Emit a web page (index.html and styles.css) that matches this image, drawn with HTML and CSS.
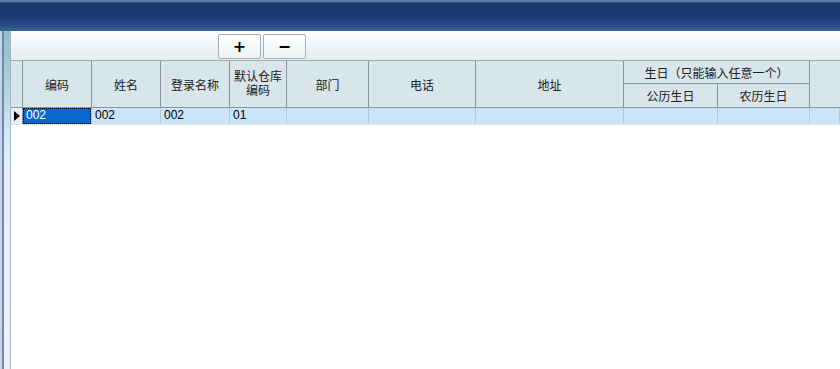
FILE: index.html
```html
<!DOCTYPE html>
<html lang="zh">
<head>
<meta charset="utf-8">
<title>用户</title>
<link rel="stylesheet" href="styles.css">
</head>
<body>
<div class="titlebar"></div>
<div class="body">
  <div class="side"><div class="side-fill"></div></div>
  <div class="panel">
    <div class="toolbar">
      <button class="btn">+</button>
      <button class="btn">−</button>
    </div>
    <div class="grid">
      <div class="hcell rowhead span2"></div>
      <div class="hcell span2">编码</div>
      <div class="hcell span2">姓名</div>
      <div class="hcell span2">登录名称</div>
      <div class="hcell span2 two"><span class="ln">默认仓库</span><span class="ln">编码</span></div>
      <div class="hcell span2">部门</div>
      <div class="hcell span2">电话</div>
      <div class="hcell span2">地址</div>
      <div class="hcell group">生日（只能输入任意一个）</div>
      <div class="hcell span2 last"></div>
      <div class="hcell sub">公历生日</div>
      <div class="hcell sub">农历生日</div>

      <div class="dcell rowhead"><span class="tri"></span></div>
      <div class="dcell sel"><span class="focus">002</span></div>
      <div class="dcell">002</div>
      <div class="dcell">002</div>
      <div class="dcell">01</div>
      <div class="dcell"></div>
      <div class="dcell"></div>
      <div class="dcell"></div>
      <div class="dcell"></div>
      <div class="dcell"></div>
      <div class="dcell last"></div>
    </div>
  </div>
</div>
</body>
</html>
```

FILE: styles.css
```css
html, body {
  margin: 0;
  padding: 0;
}
body {
  width: 840px;
  height: 369px;
  overflow: hidden;
  background: #ffffff;
  font-family: "Noto Sans CJK SC", "Liberation Sans", sans-serif;
  font-size: 12px;
  color: #222;
}
.titlebar {
  height: 31px;
  background: linear-gradient(to bottom, #6483b0 0px, #4b6b9c 2px, #1b3a71 3px, #1a3a72 16px, #244a80 24px, #3a6696 31px);
}
.body {
  display: flex;
  height: 338px;
}
.side {
  width: 11px;
  flex: none;
  display: flex;
  background: linear-gradient(to right, #c4d6e4 0, #c4d6e4 2px, #7087b0 2px, #7087b0 4px, transparent 4px, transparent 10px, #a6b6c8 10px);
}
.side-fill {
  margin-left: 4px;
  width: 6px;
  background: linear-gradient(to bottom, #8dbfc6 0px, #a6ccd6 40px, #d4e6f4 100px, #e6f0fc 140px, #e8f2fe 338px);
}
.panel {
  flex: 1;
  display: flex;
  flex-direction: column;
}
.toolbar {
  height: 30px;
  box-sizing: border-box;
  border-bottom: 1px solid #a3aab0;
  background: linear-gradient(to bottom, #fdfefe 0, #f4f7f9 10px, #e6ecf0 29px);
  display: flex;
  align-items: flex-start;
  padding-top: 3px;
  padding-left: 207px;
  gap: 2px;
}
.btn {
  width: 43px;
  height: 25px;
  box-sizing: border-box;
  border: 1px solid #a8b0b6;
  border-radius: 2px;
  background: linear-gradient(to bottom, #ffffff, #eef1f3);
  font-family: "DejaVu Sans", sans-serif;
  font-weight: bold;
  font-size: 16px;
  line-height: 20px;
  color: #000;
  padding: 0;
  margin: 0;
}
.grid {
  display: grid;
  grid-template-columns: 12px 69px 69px 69px 57px 82px 107px 148px 94px 92px 1fr;
  grid-template-rows: 23px 24px 16px;
  border-bottom: 1px solid #d8e4ec;
}
.hcell {
  background: #d8e5eb;
  border-right: 1px solid #8c969c;
  display: flex;
  align-items: center;
  justify-content: center;
  font-size: 12px;
  line-height: 12px;
  color: #202020;
  text-align: center;
  padding-top: 1px;
}
.span2 {
  grid-row: span 2;
  border-bottom: 1px solid #8c969c;
}
.two {
  flex-direction: column;
  padding-top: 0;
  font-family: "Liberation Sans", "Noto Sans CJK SC", sans-serif;
}
.ln {
  display: block;
  height: 14px;
  line-height: 14px;
}
.group {
  grid-column: span 2;
  border-bottom: 1px solid #8c969c;
}
.sub {
  border-bottom: 1px solid #8c969c;
}
.last {
  border-right: none;
}
.rowhead.hcell {
  border-right: 1px solid #8c969c;
}
.dcell {
  background: #cae5fa;
  border-right: 1px solid #b4cadb;
  font-family: "Liberation Sans", "DejaVu Sans", sans-serif;
  font-size: 12px;
  line-height: 15px;
  color: #000;
  padding-left: 3px;
  overflow: hidden;
  white-space: nowrap;
}
.dcell.rowhead {
  background: #e8eef2;
  border-right: 1px solid #8c969c;
  padding-left: 0;
  display: flex;
  align-items: center;
  justify-content: center;
}
.tri {
  width: 0;
  height: 0;
  border-top: 5px solid transparent;
  border-bottom: 5px solid transparent;
  border-left: 6px solid #000;
}
.dcell.sel {
  background: #0c68cf;
  padding: 0;
}
.focus {
  display: block;
  height: 100%;
  box-sizing: border-box;
  border: 1px dotted #000;
  color: #fff;
  padding-left: 2px;
  line-height: 13px;
}
```
